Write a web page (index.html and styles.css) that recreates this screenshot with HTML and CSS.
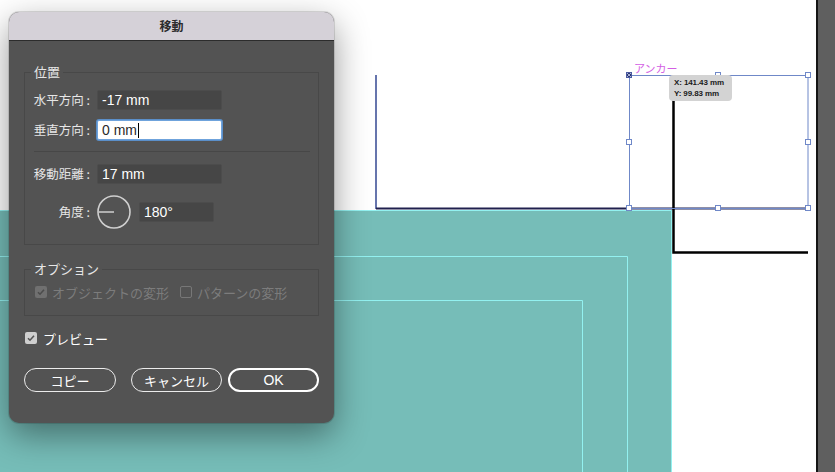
FILE: index.html
```html
<!DOCTYPE html>
<html lang="ja">
<head>
    <meta charset="UTF-8">
    <meta name="viewport" content="width=device-width, initial-scale=1.0">
    <title>移動</title>
    <link rel="stylesheet" href="styles.css">
</head>
<body>

    <div class="canvas">
        <svg class="art" width="835" height="472" viewBox="0 0 835 472">
            <rect x="0" y="210" width="672" height="262" fill="#76bdb8"/>
            <path d="M0 210.5 H671.5 V472" stroke="#93f1f0" fill="none"/>
            <path d="M0 256.5 H627.5 V472" stroke="#93f1f0" fill="none"/>
            <path d="M0 300.5 H582.5 V472" stroke="#93f1f0" fill="none"/>

            <line x1="376" y1="75" x2="376" y2="209" stroke="#6675ad" stroke-width="2"/>
            <line x1="376" y1="208.5" x2="808" y2="208.5" stroke="#20204f" stroke-width="2"/>
            <path d="M673.5 100 V252.5 H808" stroke="#000" stroke-width="2.5" fill="none"/>

            <rect x="629.5" y="75.5" width="178.5" height="133" stroke="#6f88c8" fill="none"/>
            <g fill="#fff" stroke="#6f88c8">
                <rect x="715.5" y="72.5" width="5" height="5"/>
                <rect x="805.5" y="72.5" width="5" height="5"/>
                <rect x="626.5" y="139.5" width="5" height="5"/>
                <rect x="805.5" y="139.5" width="5" height="5"/>
                <rect x="626.5" y="205.5" width="5" height="5"/>
                <rect x="715.5" y="205.5" width="5" height="5"/>
                <rect x="805.5" y="205.5" width="5" height="5"/>
            </g>
            <rect x="626.5" y="72.5" width="5" height="5" fill="#2a3470" stroke="#4a5aa0"/>
            <path d="M627 73 L631 77 M631 73 L627 77" stroke="#c8d0f0" stroke-width="0.8"/>

            <rect x="816" y="0" width="2" height="472" fill="#151515"/>
            <rect x="818" y="0" width="17" height="472" fill="#5f5f5f"/>
        </svg>
        <div class="anchor-label">アンカー</div>
        <div class="tip">X: 141.43 mm<br>Y: 99.83 mm</div>
    </div>

    <div class="dialog">
        <div class="titlebar">移動</div>
        <div class="dialog-body">
            <fieldset class="group group-pos">
                <legend>位置</legend>
                <div class="row">
                    <span class="label">水平方向 :</span>
                    <div class="field">-17 mm</div>
                </div>
                <div class="row row-gap">
                    <span class="label">垂直方向 :</span>
                    <div class="field field-focus">0 mm<span class="caret"></span></div>
                </div>
                <div class="divider"></div>
                <div class="row row-dist">
                    <span class="label">移動距離 :</span>
                    <div class="field">17 mm</div>
                </div>
                <div class="row row-angle">
                    <span class="label">角度 :</span>
                    <svg class="dial" width="34" height="34" viewBox="0 0 34 34">
                        <circle cx="17" cy="17" r="16" fill="none" stroke="#cfcfcf" stroke-width="1.6"/>
                        <line x1="1.5" y1="17" x2="17" y2="17" stroke="#cfcfcf" stroke-width="1.6"/>
                    </svg>
                    <div class="field field-angle">180°</div>
                </div>
            </fieldset>

            <fieldset class="group group-opt">
                <legend>オプション</legend>
                <div class="check-row">
                    <span class="box box-disabled checked">
                        <svg width="12" height="12" viewBox="0 0 12 12"><path d="M3 6.2 L5 8.2 L9 3.8" fill="none" stroke="#4c4c4c" stroke-width="1.6"/></svg>
                    </span>
                    <span class="check-text disabled">オブジェクトの変形</span>
                    <span class="box box-empty"></span>
                    <span class="check-text disabled">パターンの変形</span>
                </div>
            </fieldset>

            <div class="check-row preview-row">
                <span class="box box-on">
                    <svg width="12" height="12" viewBox="0 0 12 12"><path d="M3 6.2 L5 8.2 L9 3.8" fill="none" stroke="#555" stroke-width="1.6"/></svg>
                </span>
                <span class="check-text">プレビュー</span>
            </div>

            <div class="button-row">
                <button class="button button-copy">コピー</button>
                <div class="button-group">
                    <button class="button button-cancel">キャンセル</button>
                    <button class="button button-ok">OK</button>
                </div>
            </div>
        </div>
    </div>

</body>
</html>
```

FILE: styles.css
```css
body {
    margin: 0;
    width: 835px;
    height: 472px;
    overflow: hidden;
    position: relative;
    background-color: #fff;
    font-family: "Noto Sans CJK JP", "Liberation Sans", sans-serif;
}

.canvas {
    position: absolute;
    inset: 0;
}

.art {
    display: block;
}

.anchor-label {
    position: absolute;
    left: 634px;
    top: 61px;
    font-size: 11px;
    line-height: 14px;
    color: #d35ee4;
}

.tip {
    position: absolute;
    left: 669px;
    top: 75px;
    width: 58px;
    height: 24px;
    padding: 2px 0 0 5px;
    background-color: #d3d3d3;
    border-radius: 4px;
    font-family: "Liberation Sans", sans-serif;
    font-size: 8px;
    font-weight: bold;
    line-height: 11px;
    color: #1a1a1a;
    letter-spacing: -0.1px;
}

/* dialog window */

.dialog {
    position: absolute;
    left: 9px;
    top: 12px;
    width: 325px;
    height: 411px;
    border-radius: 10px;
    overflow: hidden;
    background-color: #535353;
    box-shadow: 0 12px 34px rgba(0, 0, 0, 0.42), 0 0 0 1px rgba(0, 0, 0, 0.12);
}

.titlebar {
    height: 28px;
    line-height: 28px;
    text-align: center;
    background-color: #d5d1d8;
    border-bottom: 1px solid #2c2c2c;
    font-size: 12px;
    font-weight: bold;
    color: #2b2b2b;
}

.dialog-body {
    padding: 23px 15px 0 15px;
    color: #e6e6e6;
    font-size: 13px;
}

.group {
    margin: 0;
    border: 1px solid #484848;
    padding: 10px 6px 15px 6px;
    min-width: 0;
}

.group legend {
    padding: 0 3px;
    font-size: 13px;
    line-height: 16px;
    color: #e6e6e6;
}

.group-opt {
    margin-top: 16px;
    padding: 7px 6px 15px 6px;
}

.row {
    display: flex;
    align-items: center;
    gap: 4px;
    height: 20px;
}

.row-gap {
    margin-top: 10px;
}

.row-dist {
    margin-top: 12px;
}

.row-angle {
    margin-top: 11px;
    height: 34px;
}

.label {
    width: 59px;
    padding-right: 3px;
    text-align: right;
    white-space: nowrap;
    font-size: 12.5px;
    line-height: 20px;
}

.field {
    box-sizing: border-box;
    width: 125px;
    height: 20px;
    padding-left: 4px;
    background-color: #464646;
    border: 1px solid #4c4c4c;
    border-radius: 2px;
    font-family: "Liberation Sans", sans-serif;
    font-size: 14px;
    line-height: 18px;
    color: #fff;
}

.field-focus {
    background-color: #fff;
    border: 1px solid #6fa3dc;
    box-shadow: 0 0 0 1px #5b8fc9;
    color: #2a2a2a;
}

.caret {
    display: inline-block;
    width: 1px;
    height: 15px;
    margin-left: 1px;
    vertical-align: -3px;
    background-color: #000;
}

.field-angle {
    width: 75px;
    margin-left: 4px;
}

.dial {
    display: block;
}

.divider {
    margin: 11px 2px 0 3px;
    border-top: 1px solid #474747;
}

/* checkboxes */

.check-row {
    display: flex;
    align-items: center;
    height: 16px;
    padding-left: 4px;
}

.box {
    box-sizing: border-box;
    width: 12px;
    height: 12px;
    border-radius: 2px;
    margin-right: 5px;
}

.box svg {
    display: block;
}

.box-disabled {
    background-color: #707070;
}

.box-empty {
    border: 1px solid #777;
    margin-left: 11px;
}

.check-text {
    white-space: nowrap;
}

.disabled {
    color: #7c7c7c;
}

.preview-row {
    margin-top: 14px;
    padding-left: 1px;
}

.box-on {
    background-color: #cfcfcf;
    margin-right: 6px;
}

.preview-row .check-text {
    color: #fff;
}

/* buttons */

.button-row {
    display: flex;
    justify-content: space-between;
    margin-top: 22px;
}

.button-group {
    display: flex;
    gap: 6px;
}

.button {
    box-sizing: border-box;
    height: 24px;
    width: 92px;
    padding: 0;
    background: transparent;
    border: 1.5px solid #ececec;
    border-radius: 12px;
    font-family: "Noto Sans CJK JP", "Liberation Sans", sans-serif;
    font-size: 13px;
    color: #fff;
    cursor: pointer;
}

.button-cancel {
    width: 91px;
}

.button-ok {
    width: 91px;
    border: 2px solid #fff;
    font-family: "Liberation Sans", sans-serif;
    font-size: 14px;
}
```
